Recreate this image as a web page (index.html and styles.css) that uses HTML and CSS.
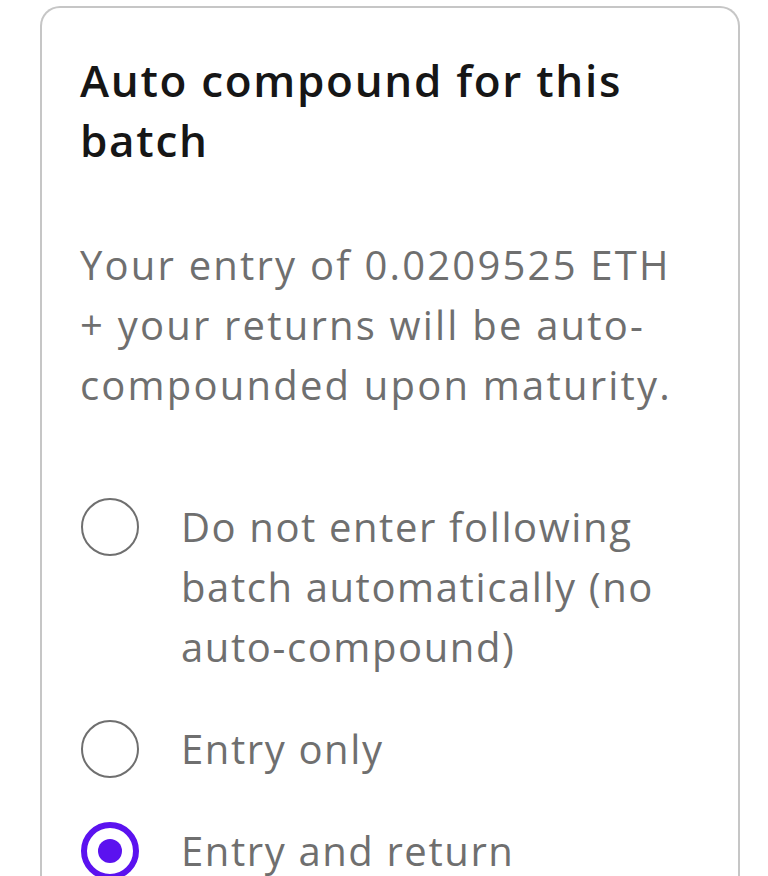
FILE: index.html
```html
<!DOCTYPE html>
<html>
<head>
<meta charset="utf-8">
<link rel="stylesheet" href="styles.css">
</head>
<body>
<div class="card">
  <h1 class="title">Auto compound for this batch</h1>
  <p class="desc">Your entry of 0.0209525 ETH + your returns will be auto-compounded upon maturity.</p>
  <div class="options">
    <label class="option">
      <span class="radio"></span>
      <span class="label">Do not enter following batch automatically (no auto-compound)</span>
    </label>
    <label class="option">
      <span class="radio"></span>
      <span class="label">Entry only</span>
    </label>
    <label class="option">
      <span class="radio checked"></span>
      <span class="label">Entry and return</span>
    </label>
  </div>
</div>
</body>
</html>
```
FILE: styles.css
```css
html, body {
  margin: 0;
  padding: 0;
  background: #ffffff;
  overflow: hidden;
}
body {
  font-family: "Open Sans", "Noto Sans", sans-serif;
  padding: 6px 28px 0 40px;
}
.card {
  width: 700px;
  box-sizing: border-box;
  border: 2px solid #c6c6c6;
  border-bottom: none;
  border-radius: 20px 20px 0 0;
  padding: 42px 38px 40px 38px;
  min-height: 900px;
}
.title {
  margin: 0;
  font-size: 44px;
  font-weight: 600;
  line-height: 60px;
  letter-spacing: 1.7px;
  color: #161616;
}
.desc {
  margin: 65px 0 0 0;
  font-size: 40px;
  line-height: 60px;
  letter-spacing: 2.2px;
  color: #6f6f6f;
  font-weight: 400;
}
.options {
  margin-top: 82px;
  display: flex;
  flex-direction: column;
  gap: 42px;
}
.option {
  display: flex;
  align-items: flex-start;
  gap: 42px;
}
.radio {
  flex: none;
  width: 58px;
  height: 58px;
  box-sizing: border-box;
  border: 2px solid #6f6f6f;
  border-radius: 50%;
  margin-top: 1px;
  margin-left: 1px;
  display: flex;
  align-items: center;
  justify-content: center;
}
.radio.checked {
  border: 6px solid #5b12ef;
}
.radio.checked::after {
  content: "";
  width: 24px;
  height: 24px;
  border-radius: 50%;
  background: #5b12ef;
}
.label {
  font-size: 40px;
  line-height: 60px;
  letter-spacing: 1.6px;
  color: #6f6f6f;
}
```
